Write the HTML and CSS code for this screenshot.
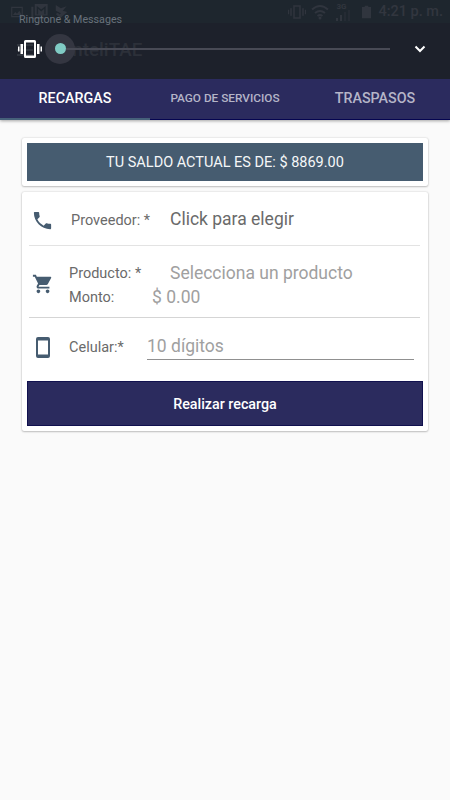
FILE: index.html
```
<!DOCTYPE html>
<html lang="es">
<head>
<meta charset="UTF-8">
<meta name="viewport" content="width=device-width, initial-scale=1">
<title>InteliTAE</title>
<link rel="stylesheet" href="styles.css">
</head>
<body>
<header class="top">
    <div class="statusbar">
        <div class="notifications">
            <svg width="14" height="14" viewBox="0 0 24 24"><path fill-rule="evenodd" d="M2 3h20v18H2zM4 5v14h16V5zM5 17l4-5 3 3 4-5 4 7z"/></svg>
            <svg width="17" height="15" viewBox="0 0 24 22"><path fill-rule="evenodd" d="M5 0h19v17H5zM8 3v12h2V7l4.500 4L19 7v8h2V3l-6.500 5zM0 4h3v15h17v3H0z"/></svg>
            <svg width="13" height="14" viewBox="0 0 20 22"><path d="M1 0l8 5 9-3-6 7 7 2-11 10-7-7 3-2 3 3 2-2-8-4z"/></svg>
        </div>
        <div class="signals">
            <svg width="18" height="14" viewBox="0 0 24 18"><path fill-rule="evenodd" d="M0 6h1.500v6H0zM3 4h2v10H3zM19 4h2v10h-2zM22.500 6H24v6h-1.500zM7 0h10v18H7zM9 2v14h6V2z"/></svg>
            <svg class="wifi" width="18" height="16" viewBox="0 0 18 16"><path d="M1 5.500q8-7 16 0M4 9q5-4 10 0M6.500 12q2.500-2 5 0"/><circle cx="9" cy="14" r="1.500"/></svg>
            <div class="network">
                <span>3G</span>
                <svg width="14" height="11" viewBox="0 0 14 11"><path d="M0 8h2v3H0zM4 5h2v6H4z"/><path opacity=".4" d="M8 2h2v9H8zM12 0h2v11h-2z"/></svg>
            </div>
            <svg class="battery" width="9" height="14" viewBox="0 0 10 14"><path d="M3 0h4v1.500h3V14H0V1.500h3z"/></svg>
            <span class="clock">4:21 p. m.</span>
        </div>
    </div>
    <div class="appbar">
        <svg width="16" height="12" viewBox="0 0 16 12"><path d="M0 0h16v2H0zM0 5h16v2H0zM0 10h16v2H0z"/></svg>
        <span>InteliTAE</span>
    </div>
    <!-- system volume panel, slides over the app bar -->
    <div class="volume">
        <div class="volume-title">Ringtone &amp; Messages</div>
        <div class="volume-row">
            <svg class="vibrate" width="24" height="18" viewBox="0 0 24 18"><path fill-rule="evenodd" d="M0 6.500h1.500v5H0zM2.500 4h2.500v10H2.500zM19 4h2.500v10H19zM22.500 6.500H24v5h-1.500zM7.500 0h9a1.500 1.500 0 0 1 1.500 1.500v15a1.500 1.500 0 0 1-1.500 1.500h-9A1.500 1.500 0 0 1 6 16.500v-15A1.500 1.500 0 0 1 7.500 0zM8 2.500v13h8v-13z"/></svg>
            <div class="slider"><span class="halo"><span class="thumb"></span></span><span class="track"></span></div>
            <svg class="chevron" width="12" height="8" viewBox="0 0 12 8"><path d="M1.500 1.500L6 6l4.500-4.500"/></svg>
        </div>
    </div>
</header>
<nav class="tabs">
    <a class="tab active">RECARGAS</a>
    <a class="tab small">PAGO DE SERVICIOS</a>
    <a class="tab">TRASPASOS</a>
</nav>
<main class="content">
    <section class="card">
        <div class="balance">TU SALDO ACTUAL ES DE: $ 8869.00</div>
    </section>
    <section class="card form">
        <div class="row provider">
            <svg class="icon" width="23" height="23" viewBox="0 0 24 24"><path d="M6.620 10.790c1.440 2.830 3.760 5.140 6.590 6.590l2.200-2.200c.27-.27.67-.36 1.020-.24 1.120.37 2.330.57 3.570.57.550 0 1 .45 1 1V20c0 .55-.45 1-1 1-9.390 0-17-7.610-17-17 0-.55.45-1 1-1h3.500c.55 0 1 .45 1 1 0 1.250.2 2.450.57 3.570.11.35.03.74-.25 1.020l-2.200 2.200z"/></svg>
            <span class="label">Proveedor: *</span>
            <span class="value">Click para elegir</span>
        </div>
        <div class="row product">
            <svg class="icon" width="22" height="22" viewBox="0 0 24 24"><path d="M7 18c-1.100 0-1.990.9-1.990 2S5.900 22 7 22s2-.9 2-2-.9-2-2-2zM1 2v2h2l3.600 7.590-1.350 2.450c-.16.28-.25.61-.25.960 0 1.100.9 2 2 2h12v-2H7.420c-.14 0-.25-.11-.25-.25l.03-.12.9-1.630h7.450c.75 0 1.410-.41 1.750-1.030l3.580-6.490c.08-.14.12-.31.12-.48 0-.55-.45-1-1-1H5.210l-.94-2H1zm16 16c-1.100 0-1.990.9-1.990 2s.89 2 1.990 2 2-.9 2-2-.9-2-2-2z"/></svg>
            <div class="lines">
                <div class="line"><span class="label">Producto: *</span><span class="value hint">Selecciona un producto</span></div>
                <div class="line amount"><span class="label">Monto:</span><span class="value hint">$ 0.00</span></div>
            </div>
        </div>
        <div class="row phone">
            <svg class="icon" width="14" height="21" viewBox="0 0 14 21"><path fill-rule="evenodd" d="M2 0h10a2 2 0 0 1 2 2v17a2 2 0 0 1-2 2H2a2 2 0 0 1-2-2V2a2 2 0 0 1 2-2zM2 3.500v14h10v-14z"/></svg>
            <span class="label">Celular:*</span>
            <input class="value" type="tel" placeholder="10 dígitos">
        </div>
        <button class="submit" type="button">Realizar recarga</button>
    </section>
</main>
</body>
</html>
```
FILE: styles.css
```
* {
  box-sizing: border-box;
}
body {
  margin: 0;
  min-height: 100vh;
  background-color: #fafafa;
  font-family: Roboto, sans-serif;
  color: #6a6a6a;
}
svg {
  flex: none;
}

/* Status bar and app bar, dimmed behind the volume panel */
.top {
  position: relative;
  height: 79px;
  background-color: #1d212b;
  color: #32363f;
  fill: #30353e;
}
.statusbar {
  display: flex;
  justify-content: space-between;
  height: 23px;
  padding: 0 7px 0 10px;
  background-color: #1e262e;
}
.notifications, .signals {
  display: flex;
  align-items: center;
}
.notifications {
  gap: 7px;
}
.wifi {
  margin-left: 5px;
}
.wifi path {
  fill: none;
  stroke: #30353e;
  stroke-width: 2;
}
.network {
  display: flex;
  flex-direction: column;
  margin-left: 7px;
  font-size: 8px;
  font-weight: 700;
  line-height: 7px;
}
.battery {
  margin: 0 7px 0 12px;
}
.clock {
  font-size: 14.5px;
  font-weight: 500;
}
.appbar {
  display: flex;
  align-items: center;
  gap: 34px;
  height: 53px;
  padding-left: 17px;
  color: #2c3039;
  font-size: 18.8px;
  font-weight: 500;
}

.volume {
  position: absolute;
  top: 0;
  left: 0;
  width: 100%;
  padding: 13px 24px 0 18px;
}
.volume-title {
  padding-left: 1px;
  color: #68717b;
  font-size: 10.7px;
  line-height: 13px;
}
.volume-row {
  display: flex;
  align-items: center;
  height: 45px;
}
.vibrate {
  fill: #fff;
}
.slider {
  display: flex;
  align-items: center;
  width: 345px;
  margin: 0 24px 0 3px;
}
.halo {
  display: flex;
  align-items: center;
  justify-content: center;
  width: 30px;
  height: 30px;
  border-radius: 50%;
  background-color: #343641;
}
.thumb {
  width: 11px;
  height: 11px;
  border-radius: 50%;
  background-color: #80cbc4;
}
.track {
  flex: 1;
  height: 2px;
  margin-left: -9px;
  background-color: #484a55;
}
.chevron {
  margin-top: 1px;
  fill: none;
  stroke: #fff;
  stroke-width: 2;
}

.tabs {
  display: grid;
  grid-template-columns: repeat(3, 1fr);
  height: 41px;
  background-color: #2b2b5e;
  border-bottom: 1px solid #050550;
  box-shadow: 0 1px 3px rgba(0, 0, 0, .35);
}
.tab {
  display: flex;
  align-items: center;
  justify-content: center;
  height: 41px;
  padding-bottom: 3px;
  color: #b5b5c8;
  font-size: 14.3px;
  font-weight: 500;
}
.tab.active {
  padding-bottom: 1px;
  border-bottom: 2px solid #46617a;
  color: #fff;
}
.tab.small {
  font-size: 11.8px;
}

.content {
  padding: 18px 22px;
}
.card {
  padding: 5px;
  border-radius: 2px;
  background-color: #fff;
  box-shadow: 0 0 2px rgba(0, 0, 0, .2), 0 1px 2px rgba(0, 0, 0, .2);
}
.balance {
  height: 38px;
  background-color: #465c70;
  color: #f5f7f8;
  font-size: 14.5px;
  line-height: 39px;
  text-align: center;
}
.form {
  margin-top: 6px;
  padding-top: 0;
}
.row {
  display: flex;
  align-items: center;
  margin: 0 3px 0 2px;
}
.icon {
  fill: #465c70;
}
.label {
  font-size: 14.5px;
}
.value {
  font-size: 17.5px;
}
.hint {
  color: #a0a0a0;
}
.provider {
  height: 54px;
  padding: 3px 0 0 2px;
  border-bottom: 1px solid #e3e3e3;
}
.provider .label {
  width: 99px;
  margin-left: 17px;
}
.provider .value {
  margin-top: -2px;
}
.product {
  height: 72px;
  padding-left: 3px;
  border-bottom: 1px solid #d5d5d5;
}
.product .icon {
  margin-top: 4px;
}
.lines {
  margin: 6px 0 0 15px;
}
.line {
  display: flex;
  align-items: center;
  height: 24px;
}
.line .label {
  width: 101px;
  padding-top: 2px;
}
.amount .label {
  width: 83px;
}
.phone {
  height: 63px;
  padding: 0 6px 4px 7px;
}
.phone .label {
  width: 78px;
  margin-left: 19px;
}
.phone input {
  flex: 1;
  min-width: 0;
  height: 26px;
  margin-top: -2px;
  padding: 0;
  border: 0;
  border-bottom: 1px solid #909090;
  background: none;
  font-family: inherit;
}
.phone input::placeholder {
  color: #a0a0a0;
}
.submit {
  display: block;
  width: 100%;
  height: 45px;
  padding: 0;
  border: 1px solid #11114f;
  background-color: #2b2b5e;
  color: #fff;
  font: 500 14.3px Roboto, sans-serif;
}
```
